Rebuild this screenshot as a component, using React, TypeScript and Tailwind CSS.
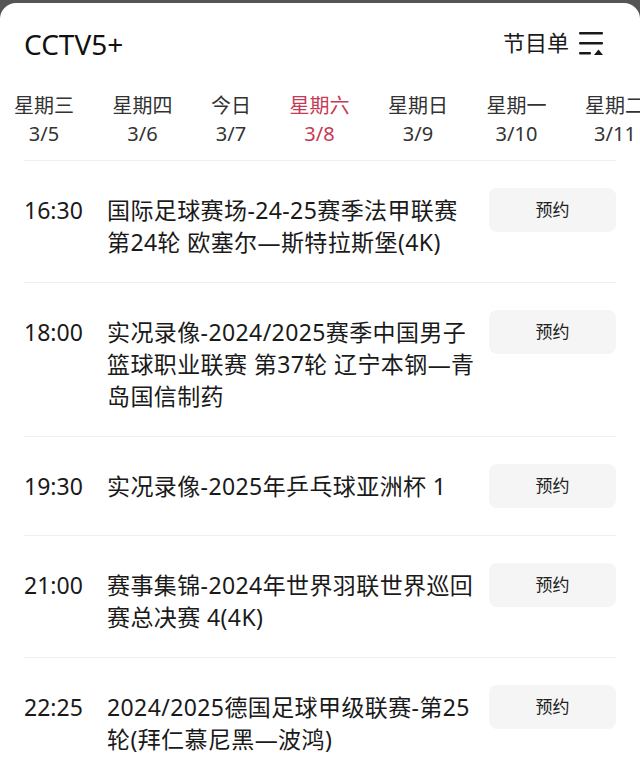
import React from "react";

const font = { fontFamily: '"Noto Sans", "Noto Sans CJK SC", sans-serif' };

const days = [
  { label: "星期三", date: "3/5" },
  { label: "星期四", date: "3/6" },
  { label: "今日", date: "3/7" },
  { label: "星期六", date: "3/8", active: true },
  { label: "星期日", date: "3/9" },
  { label: "星期一", date: "3/10" },
  { label: "星期二", date: "3/11" },
];

const programs = [
  { time: "16:30", lines: ["国际足球赛场-24-25赛季法甲联赛", "第24轮 欧塞尔—斯特拉斯堡(4K)"] },
  {
    time: "18:00",
    lines: ["实况录像-2024/2025赛季中国男子", "篮球职业联赛 第37轮 辽宁本钢—青", "岛国信制药"],
  },
  { time: "19:30", lines: ["实况录像-2025年乒乓球亚洲杯 1"] },
  { time: "21:00", lines: ["赛事集锦-2024年世界羽联世界巡回", "赛总决赛 4(4K)"] },
  { time: "22:25", lines: ["2024/2025德国足球甲级联赛-第25", "轮(拜仁慕尼黑—波鸿)"] },
];

function ListIcon() {
  return (
    <svg width="28" height="28" viewBox="0 0 28 28" className="text-[#1a1a1a]">
      <rect x="1" y="4" width="24" height="2.6" rx="1" fill="currentColor" />
      <rect x="1" y="14" width="24" height="2.6" rx="1" fill="currentColor" />
      <rect x="1" y="24" width="12" height="2.6" rx="1" fill="currentColor" />
      <path d="M20.5 21.5 L25 27 L16 27 Z" fill="currentColor" />
    </svg>
  );
}

export default function App() {
  return (
    <div className="w-[640px] h-[778px] bg-[#555] overflow-hidden" style={font}>
      <div className="mt-[3px] h-[775px] bg-white rounded-t-[16px] overflow-hidden">
        {/* header */}
        <div className="h-[82px] flex items-center justify-between pl-6 pr-[34px]">
          <div className="text-[28px] text-[#111] leading-none">CCTV5+</div>
          <div className="flex items-center gap-[9px] -mt-[4px]">
            <span className="text-[22px] text-[#1a1a1a] leading-none">节目单</span>
            <ListIcon />
          </div>
        </div>

        {/* days */}
        <div className="flex gap-[38.5px] pl-[14px] pt-[7px] pb-[12px] whitespace-nowrap">
          {days.map((d) => (
            <div
              key={d.date}
              className={
                "flex flex-col items-center shrink-0 text-[20px] leading-[28px] " +
                (d.active ? "text-[#c73a55]" : "text-[#333]")
              }
            >
              <span>{d.label}</span>
              <span>{d.date}</span>
            </div>
          ))}
        </div>
        <div className="mx-6 h-px bg-[#efefef]" />

        {/* programs */}
        <div className="mx-6">
          {programs.map((p) => (
            <div key={p.time} className="flex items-start border-b border-[#efefef] pt-[27px]">
              <div className="w-[83px] pt-[6px] pb-[24px] text-[23px] leading-[32px] text-[#1a1a1a] shrink-0">
                {p.time}
              </div>
              <div className="flex-1 pt-[6px] pb-[24px] text-[23px] leading-[32px] tracking-[0.4px] text-[#1a1a1a] whitespace-nowrap">
                {p.lines.map((l) => (
                  <div key={l}>{l}</div>
                ))}
              </div>
              <div className="pb-[27px] shrink-0">
                <button className="w-[127px] h-[44px] rounded-[8px] bg-[#f5f5f5] text-[17px] text-[#222]">
                  预约
                </button>
              </div>
            </div>
          ))}
        </div>
      </div>
    </div>
  );
}
